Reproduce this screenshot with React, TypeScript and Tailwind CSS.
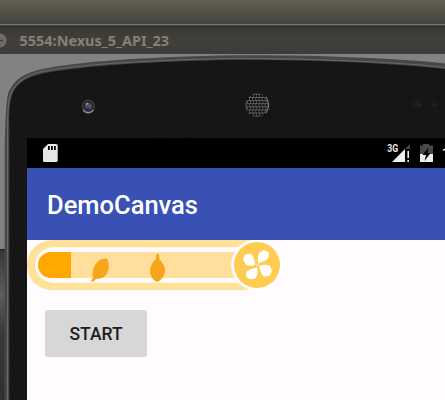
import React from 'react';

function PhoneFrame() {
  const speakerDots: React.ReactNode[] = [];
  for (let r = -3; r <= 3; r++) {
    for (let c = -3; c <= 3; c++) {
      if (r * r + c * c <= 13) {
        speakerDots.push(
          <rect key={`${r}-${c}`} x={256.2 + c * 3.1 + (r % 2 ? 0.8 : 0)} y={50.2 + r * 3.1} width="2.3" height="2.1" fill="#0c0c0c" />,
        );
      }
    }
  }
  return (
    <svg className="absolute inset-0" width="445" height="346" viewBox="0 0 445 346">
      <defs>
        <linearGradient id="desk" x1="0" y1="0" x2="0" y2="1">
          <stop offset="0" stopColor="#383838" />
          <stop offset=".3" stopColor="#5c5c5c" />
          <stop offset=".55" stopColor="#393939" />
          <stop offset="1" stopColor="#303030" />
        </linearGradient>
        <filter id="grain" x="0" y="0" width="100%" height="100%">
          <feTurbulence type="fractalNoise" baseFrequency=".65" numOctaves="2" seed="4" />
          <feColorMatrix values="0 0 0 0 1  0 0 0 0 1  0 0 0 0 1  .14 0 0 0 -.03" />
          <feComposite in2="SourceGraphic" operator="in" />
        </filter>
      </defs>
      <rect width="445" height="346" fill="#828282" />
      <rect y="196" width="6" height="150" fill="url(#desk)" />
      <rect y="195" width="5" height="1.5" fill="#262626" />
      <path d="M4.700 346V96C5.200 70 6 43 9 37C15 25 25 19 40 15.500C80 7 145 3.500 220 1.500C300 .5 390 3.500 445 9.500V346Z" fill="#474747" />
      <path d="M7.500 346V90C7.300 55 8 45 12 37C19 25 29 20.500 40 18C80 10 145 6.500 220 4.800C300 3.800 390 7.500 445 13.500" fill="none" stroke="#686868" strokeWidth="1.1" />
      <path d="M9.300 346V75C9 52 10 43 15 35C21 26 31 22 45 19C90 11 150 8 220 6C300 5 390 9 445 15V346Z" fill="#131313" />
      <path d="M9.300 346V75C9 52 10 43 15 35C21 26 31 22 45 19C90 11 150 8 220 6C300 5 390 9 445 15V346Z" fill="#fff" filter="url(#grain)" opacity=".35" />
      <circle cx="88.300" cy="52.300" r="6.700" fill="#39393b" />
      <circle cx="88.300" cy="52.300" r="4.300" fill="#505056" stroke="#202024" strokeWidth="1.300" />
      <path d="M83 56Q88 61.500 93.500 56" fill="none" stroke="#8d8d8d" strokeWidth="1.500" />
      <path d="M86 50.500l2-1.500" stroke="#a5a5a8" strokeWidth="1.300" />
      <path d="M86 53.500l2 1.500l2-.5" fill="none" stroke="#2525b0" strokeWidth="1.800" />
      <circle cx="257.300" cy="51.200" r="11.800" fill="#606060" stroke="#2a2a2a" />
      {speakerDots}
      <path d="M266 43Q271 51 266 59" fill="none" stroke="#8a8a88" />
      <circle cx="418" cy="50" r="5" fill="#1b1b19" />
      <circle cx="434" cy="50" r="4" fill="#1a1918" />
      <circle cx="419" cy="51" r="1.200" fill="#3b2722" />
      <circle cx="435" cy="50.500" r="1" fill="#332521" />
    </svg>
  );
}

function StatusBar() {
  return (
    <div className="flex h-[30px] w-full shrink-0 bg-black">
      <svg width="418" height="30" viewBox="27 138 418 30">
        <path d="M48 144H56Q57.700 144 57.700 145.700V160.500Q57.700 162 56 162H44.500Q43 162 43 160.500V149Z" fill="#e7e7e7" />
        <path d="M48 146h1.800v4H48zM51 146h1.800v4H51zM54 146h1.800v4H54z" fill="#000" />
        <text x="387.300" y="152" fill="#e8e8e8" fontSize="10.500" fontWeight="700" fontFamily="Roboto, sans-serif" textLength="11" lengthAdjust="spacingAndGlyphs">3G</text>
        <path d="M410 144V149H405Z" fill="#484848" />
        <path d="M392 162L405 149V162Z" fill="#eee" />
        <path d="M407.400 151h1.600v7h-1.600zM407.400 160h1.600v2h-1.600z" fill="#eee" />
        <path d="M423 144h6v1.500h4V154h-13v-8.500h3z" fill="#484848" />
        <path d="M420 154h13v8h-13z" fill="#eee" />
        <path d="M428.500 147.500L422.500 155H426L424.500 161L430.500 153H427.500Z" fill="#000" />
        <path d="M443 150.500l2-1.500" stroke="#eee" strokeWidth="1.500" />
      </svg>
    </div>
  );
}

function ProgressBar() {
  return (
    <svg width="260" height="50" viewBox="27 240 260 50" className="block shrink-0">
      <path d="M257 240H52A25 25 0 0 0 52 290H257Z" fill="#ffe198" />
      <path d="M257 247.300H53A18 17.700 0 0 0 53 282.700H257Z" fill="#fffafe" />
      <path d="M257 252H51A13 13 0 0 0 51 278H257Z" fill="#ffdf9b" />
      <path d="M71 252H51A13 13 0 0 0 51 278H71Z" fill="#ffa800" />
      <path d="M107 258.200C109.800 264 109.500 271 105.500 275.500C101.500 279.500 97 278 95.500 279.500L93 281.800L90.800 281L93 278C91.500 271 94 265 98.500 261C101.500 258.500 104 259.300 107 258.200Z" fill="#f8a51b" />
      <path d="M156.500 254H159L159.500 259C163 263 165.200 267 165 271.500C164.500 277 161 280 157.500 282C153 280.500 150.500 276.500 150 271.500C150 266 153 262 155.700 259Z" fill="#f8a51b" />
      <circle cx="257" cy="265" r="25.800" fill="#fffcff" />
      <circle cx="257" cy="265" r="23" fill="#ffcb50" />
      <g fill="#fff">
        <path d="M258.300 263.500C257.500 260 257.700 255 259.500 252.500C260.500 251.500 262 252 263 250.300C265 249.800 267 251.500 268.500 252.500C269.700 254.500 268.700 255.500 268.700 257C267.500 260.500 262.500 261.500 258.300 263.500Z" />
        <path d="M259 266C262 264.800 266.500 264 269.300 265.500C270.700 266.500 270.500 268 271.800 269.500C271.800 272 270.700 273.500 270 275C268 277 266.500 276 264.500 276.500C261 275.500 260.500 270 259 266Z" />
        <path d="M257 267.300C258 270.500 257.800 275.500 256 277.500C255 278.800 253.500 278 252 279.200C249.500 279.500 248 278.500 246.500 277C245.500 275 246.500 274 246.200 272.500C248 269 253 269 257 267.300Z" />
        <path d="M255.300 264.800C252 266 248.500 266 246 264.700C244.500 263.500 245 262 243.300 260.500C242.800 258 244 256.500 245 255C247 253.300 248.500 254.200 250.500 253.800C254 255.500 254.500 260.800 255.300 264.800Z" />
      </g>
      <circle cx="257.500" cy="265" r="1.300" fill="#ffe1a0" />
    </svg>
  );
}

export default function App() {
  return (
    <div className="flex h-[400px] w-[445px] flex-col overflow-hidden bg-[#828282]">
      <div className="h-[24px] shrink-0 bg-gradient-to-b from-[#625f50] to-[#44443f]" />
      <div className="h-[2px] shrink-0 border-b border-[#4b4b4b] bg-[#727273]" />
      <div className="flex h-[28px] shrink-0 items-center border-t border-[#252522] bg-gradient-to-b from-[#3a3935] via-[#403f3a] to-[#3d3c38]">
        <svg width="19" height="28" viewBox="0 0 19 28" className="shrink-0">
          <circle cx="-.5" cy="13.500" r="7.500" fill="#6c6a62" />
          <path d="M0 13.500H3" stroke="#3b3a35" strokeWidth="1.200" />
          <circle cx="-.5" cy="13.500" r="7.800" fill="none" stroke="#35342f" strokeWidth=".7" />
        </svg>
        <svg width="155" height="27" viewBox="0 0 155 27">
          <text x=".5" y="19" fill="#858077" fontSize="14" fontWeight="700" fontFamily="'Noto Sans', 'Open Sans', sans-serif" textLength="149.500" lengthAdjust="spacingAndGlyphs">5554:Nexus_5_API_23</text>
        </svg>
      </div>
      <div className="relative h-[346px] pt-[84px] pl-[27px]">
        <PhoneFrame />
        <div className="relative flex h-[262px] flex-col bg-[#fffbff]">
          <StatusBar />
          <div className="flex h-[72px] shrink-0 items-center bg-[#3951b5] pt-[4px] pl-[20px]">
            <span className="font-[Roboto,sans-serif] text-[25.500px] leading-none font-medium text-white">DemoCanvas</span>
          </div>
          <ProgressBar />
          <button className="mt-[20px] ml-[18px] flex h-[47px] w-[102px] shrink-0 items-center justify-center rounded-[3px] bg-[#d6d7d6] pt-[3px] font-[Roboto,sans-serif] text-[17.500px] leading-none font-medium text-[#1d1d1d]">START</button>
        </div>
      </div>
    </div>
  );
}
